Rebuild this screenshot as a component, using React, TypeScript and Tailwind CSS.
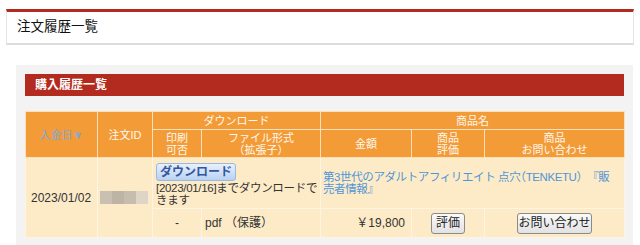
import React from 'react';

const th = 'border border-[#fbe0bb] bg-[#f39b37] text-[#fff8ee] font-normal text-[11px] leading-[12px] text-center align-middle';
const td = 'border border-[#fff4e2] bg-[#fdebc7] text-[12px] leading-[12px] text-[#333] align-middle';

export default function App() {
  return (
    <div className="w-[640px] h-[245px] overflow-hidden bg-white" style={{ fontFamily: '"Liberation Sans", "Noto Sans CJK JP", sans-serif' }}>
      {/* Page title */}
      <div className="pt-[9px] px-[6px]">
        <div className="h-[36px] border-t-[3px] border-t-[#b32a1e] border-x border-x-[#e4e4e4] border-b-2 border-b-[#dcdcdc] bg-white flex items-center pl-[10px]">
          <h1 className="text-[13.5px] text-[#111]">注文履歴一覧</h1>
        </div>
      </div>

      {/* Purchase history panel */}
      <div className="mt-[20px] ml-[16px] mr-[7px] bg-[#f3f3f3] p-[9px]">
        <div className="h-[22px] bg-[#b22b1e] flex items-center pl-[10px]">
          <h2 className="text-[12px] font-bold text-white">購入履歴一覧</h2>
        </div>

        <table className="mt-[15px] w-[599px] border-collapse table-fixed">
          <colgroup>
            <col className="w-[72px]" />
            <col className="w-[55px]" />
            <col className="w-[49px]" />
            <col className="w-[119px]" />
            <col className="w-[91px]" />
            <col className="w-[73px]" />
            <col className="w-[140px]" />
          </colgroup>
          <thead>
            <tr className="h-[18px]">
              <th rowSpan={2} className={th}>
                <span className="text-[#82a9d8]">入金日▼</span>
              </th>
              <th rowSpan={2} className={th}>注文ID</th>
              <th colSpan={2} className={th}>ダウンロード</th>
              <th colSpan={3} className={th}>商品名</th>
            </tr>
            <tr className="h-[28px]">
              <th className={th}>印刷<br />可否</th>
              <th className={th}>ファイル形式<br />（拡張子）</th>
              <th className={th}>金額</th>
              <th className={th}>商品<br />評価</th>
              <th className={th}>商品<br />お問い合わせ</th>
            </tr>
          </thead>
          <tbody>
            <tr className="h-[51px]">
              <td rowSpan={2} className={`${td} pl-[5px]`}>2023/01/02</td>
              <td rowSpan={2} className={td}>
                <div className="flex h-[13px] ml-[2px] mr-[3px]">
                  <span className="w-[12px] bg-[#c9c0b2]" />
                  <span className="w-[12px] bg-[#bdb4a6]" />
                  <span className="w-[12px] bg-[#c6bdaf]" />
                  <span className="w-[12px] bg-[#ddd5c8]" />
                </div>
              </td>
              <td colSpan={2} className={`${td} px-[3px] align-top pt-[5px]`}>
                <button className="h-[18px] w-[80px] rounded-[3px] border border-[#9ab8e2] bg-gradient-to-b from-[#e8f0fb] to-[#b9d2f2] text-[12px] font-bold text-[#34569e] leading-none">
                  ダウンロード
                </button>
                <p className="mt-[1px] text-[11.5px] leading-[12px] tracking-[-0.3px] text-[#333]">
                  <span className="whitespace-nowrap">[2023/01/16]までダウンロードで</span>
                  <br />
                  きます
                </p>
              </td>
              <td colSpan={3} className={`${td} px-[2px]`}>
                <a className="text-[#4f95d8] text-[11.5px] leading-[12px] tracking-[-0.4px]">
                  <span className="whitespace-nowrap">
                    第3世代のアダルトアフィリエイト 点穴<span style={{ fontFeatureSettings: '"halt"' }}>（</span>TENKETU<span style={{ fontFeatureSettings: '"halt"' }}>）</span>　『販
                  </span>
                  <br />
                  売者情報』
                </a>
              </td>
            </tr>
            <tr className="h-[29px]">
              <td className={`${td} text-center`}>-</td>
              <td className={`${td} pl-[3px]`}>pdf （保護）</td>
              <td className={`${td} text-right pr-[6px]`}>￥19,800</td>
              <td className={`${td} text-center`}>
                <button className="h-[21px] w-[34px] rounded-[3px] border border-[#8a8a8a] bg-gradient-to-b from-[#fafafa] to-[#e2e2e2] text-[12px] text-[#222] leading-none">
                  評価
                </button>
              </td>
              <td className={`${td} text-center`}>
                <button className="h-[21px] w-[75px] rounded-[3px] border border-[#8a8a8a] bg-gradient-to-b from-[#fafafa] to-[#e2e2e2] text-[12px] text-[#222] leading-none">
                  お問い合わせ
                </button>
              </td>
            </tr>
          </tbody>
        </table>
      </div>
    </div>
  );
}
